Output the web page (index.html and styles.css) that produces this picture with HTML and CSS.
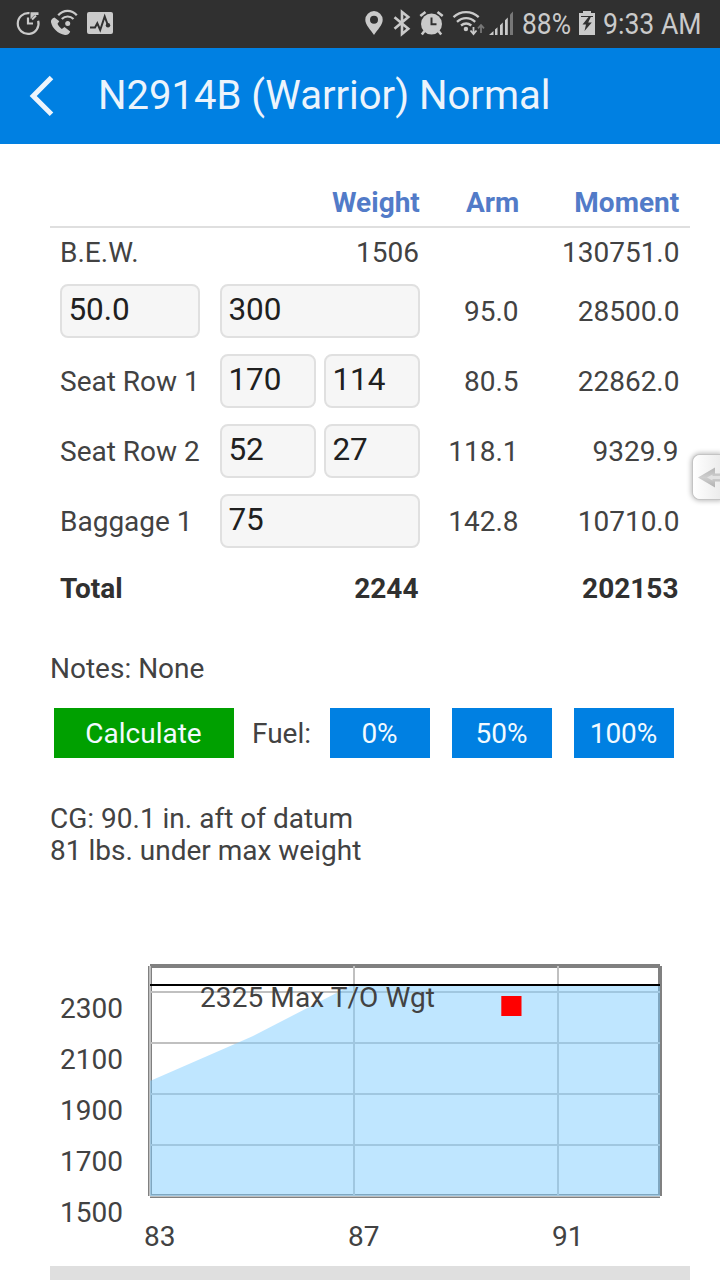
FILE: index.html
```html
<!DOCTYPE html>
<html lang="en">
<head>
<meta charset="utf-8">
<title>N2914B (Warrior) Normal</title>
<link rel="stylesheet" href="styles.css">
</head>
<body>
<div class="status-bar">
  <svg class="status-icons" width="720" height="48" viewBox="0 0 720 48">
    <g fill="none" stroke="#cacaca" stroke-width="2.2">
      <path d="M29.5 13.2A10.4 10.4 0 1 0 38.2 20.8"/>
      <path d="M28 17.5V23.5H33"/>
      <path d="M32 19.5L36 15.5"/>
    </g>
    <path d="M30.5 12.3H38.5V15H34.5L30.5 19Z" fill="#cacaca"/>
    <path d="M54.5 17.5C52 18.5 50.6 20 51 22.3C52.5 28.5 57.5 33.5 65 35C67.5 35.3 69.8 33.4 70.2 31.5L64.5 27L61.8 28.9C59.8 27.6 58.4 25.7 57.5 23.7L59.3 21.2Z" fill="#cacaca"/>
    <circle cx="67.7" cy="23.5" r="2.5" fill="#cacaca"/>
    <g fill="none" stroke="#cacaca" stroke-width="2.2"><path d="M58.2 15.3C63.5 9.5 71.7 9.5 76.8 15.3"/><path d="M61.8 19.1C65.2 15.6 70.1 15.6 73.5 19.1"/></g>
    <rect x="87" y="12" width="26" height="22" rx="2" fill="#cacaca"/>
    <path d="M90 27.5H95L97.3 23.3L100.2 30L104.7 16.5L107.8 25" fill="none" stroke="#303030" stroke-width="2"/>
    <circle cx="108" cy="25.3" r="2.2" fill="#303030"/>
    <path fill="#cacaca" fill-rule="evenodd" d="M374 35C370.5 29.8 365.3 25 365.3 19.8A8.7 8.7 0 0 1 382.7 19.8C382.7 25 377.5 29.8 374 35ZM374 15.7A4 4 0 1 0 374 23.7A4 4 0 1 0 374 15.7Z"/>
    <path d="M394.5 17.2L408.3 28.7L402 34V12L408.3 17L394.5 28.8" fill="none" stroke="#cacaca" stroke-width="2.6"/>
    <circle cx="431.5" cy="24" r="10.5" fill="#cacaca"/>
    <path d="M420.3 16L425.5 12M442.7 16L437.5 12M424.5 31L421.8 34.5M438.5 31L441.2 34.5" stroke="#cacaca" stroke-width="2.6"/>
    <path d="M431.5 17.5V24.2H436.5" fill="none" stroke="#303030" stroke-width="2"/>
    <g fill="none" stroke="#cacaca" stroke-width="2.3"><path d="M453.5 17.2C460.5 10.5 471.5 10.5 478.7 17.2"/><path d="M457 21.8C462.5 16.8 469.8 16.8 475.2 21.8"/><path d="M461 25.5C464.3 22.9 468 22.9 471.3 25.5"/></g>
    <circle cx="465.9" cy="29" r="2.2" fill="#cacaca"/>
    <path d="M473.5 27V33M470.5 30.5L473.5 34L476.5 30.5" fill="none" stroke="#cacaca" stroke-width="1.8"/>
    <path d="M481 33V25.5M478 28.3L481 25L484 28.3" fill="none" stroke="#777" stroke-width="1.8"/>
    <path fill="#cacaca" d="M489 35L493.5 31V35ZM495 29.5L497.5 27.3V35H495ZM500 25.2L502.8 22.5V35H500ZM505 20.2L507.8 17.5V35H505Z"/>
    <path fill="#777" d="M510 14.5L513 11.5V35H510Z"/>
    <path fill="#cacaca" d="M583 11H591V13H595V35H579V13H583Z"/>
    <path stroke="#303030" stroke-width="1" d="M581 16.5H593"/>
    <path fill="#303030" d="M588.5 17L582.5 24.5H586L584.5 31L591.8 22.5H588.2L590.8 17Z"/>
    <text class="status-text" x="522" y="33.8" textLength="49" lengthAdjust="spacingAndGlyphs">88%</text>
    <text class="status-text" x="603" y="33.8" textLength="98.5" lengthAdjust="spacingAndGlyphs">9:33 AM</text>
  </svg>
</div>

<header class="app-bar">
  <svg class="back" width="26" height="42" viewBox="0 0 26 42"><path d="M22.5 2.5L4.2 21L22.5 39.2" fill="none" stroke="#ecf4fc" stroke-width="5"/></svg>
  <h1 class="title">N2914B (Warrior) Normal</h1>
</header>

<main class="content">
  <section class="sheet">
    <div class="row head"><span></span><span class="num weight">Weight</span><span class="num arm">Arm</span><span class="num">Moment</span></div>
    <div class="row basic"><span>B.E.W.</span><span class="num weight">1506</span><span></span><span class="num moment">130751.0</span></div>
    <div class="row entry"><div class="field">50.0</div><div class="field">300</div><span class="num arm">95.0</span><span class="num moment">28500.0</span></div>
    <div class="row entry"><span>Seat Row 1</span><div class="pair"><div class="field">170</div><div class="field">114</div></div><span class="num arm">80.5</span><span class="num moment">22862.0</span></div>
    <div class="row entry"><span>Seat Row 2</span><div class="pair"><div class="field">52</div><div class="field">27</div></div><span class="num arm">118.1</span><span class="num">9329.9</span></div>
    <div class="row entry"><span>Baggage 1</span><div class="field">75</div><span class="num arm">142.8</span><span class="num moment">10710.0</span></div>
    <div class="row total"><span>Total</span><span class="num">2244</span><span></span><span class="num">202153</span></div>
  </section>

  <p class="notes">Notes: None</p>

  <div class="actions">
    <div class="button calculate">Calculate</div>
    <span class="fuel-label">Fuel:</span>
    <div class="fuel-options"><div class="button fuel">0%</div><div class="button fuel">50%</div><div class="button fuel">100%</div></div>
  </div>

  <p class="result">CG: 90.1 in. aft of datum<br>81 lbs. under max weight</p>

  <svg class="chart" width="640" height="304" viewBox="50 962 640 304">
    <g fill="#808080">
      <rect x="150" y="964" width="510" height="4"/>
      <rect x="148" y="966" width="4" height="230"/>
      <rect x="658" y="966" width="4" height="230"/>
      <rect x="150" y="1194" width="510" height="4"/>
    </g>
    <g fill="#c0c0c0">
      <rect x="149" y="966" width="2" height="230"/>
      <rect x="353" y="966" width="2" height="230"/>
      <rect x="557" y="966" width="2" height="230"/>
      <rect x="150" y="991" width="510" height="2"/>
      <rect x="150" y="1042" width="510" height="2"/>
      <rect x="150" y="1093" width="510" height="2"/>
      <rect x="150" y="1144" width="510" height="2"/>
      <rect x="150" y="1195" width="510" height="2"/>
    </g>
    <path d="M150 1081L252 1036.5L350 986H660V1196H150Z" fill="#7fcdff" fill-opacity=".5"/>
    <rect x="150" y="984" width="510" height="2" fill="#000"/>
    <rect x="501.3" y="996" width="20.2" height="20" fill="#f00"/>
    <g class="chart-text">
      <text x="200" y="1007" textLength="235">2325 Max T/O Wgt</text>
      <text x="60" y="1018">2300</text><text x="60" y="1069">2100</text><text x="60" y="1120">1900</text><text x="60" y="1171">1700</text><text x="60" y="1222">1500</text>
      <text x="144" y="1246">83</text><text x="348" y="1246">87</text><text x="552" y="1246">91</text>
    </g>
  </svg>
  <div class="divider"></div>
</main>

<div class="drawer-tab">
  <svg width="28" height="44" viewBox="0 0 28 44">
    <defs><linearGradient id="arrow" x1="0" y1="0" x2="0" y2="1"><stop offset="0" stop-color="#b4b4b4"/><stop offset=".5" stop-color="#cfcfcf"/><stop offset="1" stop-color="#b0b0b0"/></linearGradient></defs>
    <path d="M5 22.5L22 12.5V18.5H28V26.5H22V32.5Z" fill="url(#arrow)"/>
    <path d="M14 22.5L19.5 19.5V21H28V24H19.5V25.5Z" fill="#e2e2e2"/>
  </svg>
</div>
</body>
</html>
```
FILE: styles.css
```css
* { box-sizing: border-box; }

body {
  position: relative;
  width: 720px;
  height: 1280px;
  margin: 0;
  overflow: hidden;
  background: #fff;
  color: #424242;
  font: 28px/32px Roboto, sans-serif;
}

.status-bar { height: 48px; background: #303030; }
.status-icons { display: block; }
.status-text { fill: #cacaca; font-size: 29.5px; }

.app-bar {
  display: flex;
  align-items: center;
  height: 96px;
  padding-left: 29px;
  background: #0080e2;
}
.back { flex: none; }
.title {
  margin: 0 0 0 43px;
  color: #ecf4fc;
  font-size: 40px;
  font-weight: 400;
  line-height: 48px;
  white-space: nowrap;
}

.content { padding: 32px 30px 0 50px; }
.sheet { display: flex; flex-direction: column; }
.row {
  display: grid;
  grid-template-columns: 140px 200px 80px 140px;
  column-gap: 20px;
  align-items: center;
  padding: 0 10px;
}
.row > span { white-space: nowrap; }
.num { padding-right: 1.5px; text-align: right; }
.num.weight { padding-right: 1px; }
.num.moment { padding-right: 0.5px; }
.head {
  height: 52px;
  border-bottom: 2px solid #dfdfdf;
  color: #527bc8;
  font-weight: 700;
}
.head .num { padding-top: 4px; padding-right: 0.8px; }
.head .num.weight { padding-right: 0.2px; }
.basic { height: 48px; padding-top: 1px; }
.entry { height: 70px; }
.entry > span { padding-top: 2px; }
.total { height: 64px; padding-top: 1px; color: #303030; font-weight: 700; }

.field {
  height: 54px;
  padding: 8px 6.4px 0;
  border: 2px solid #e0e0e0;
  border-radius: 8px;
  background: #f6f6f6;
  color: #202020;
  font-size: 31.5px;
}
.pair { display: grid; grid-template-columns: 1fr 1fr; gap: 8px; }

.notes { margin: 33px 0 0; }

.actions {
  display: flex;
  align-items: center;
  height: 50px;
  margin-top: 23px;
  padding-left: 4px;
}
.button { height: 50px; padding-right: 1px; color: #f2faff; line-height: 52px; text-align: center; }
.calculate { width: 180px; background: #00a000; }
.fuel-label { width: 96px; padding: 2px 0 0 18px; }
.fuel-options { display: flex; gap: 22px; }
.fuel { width: 100px; background: #0080e2; }

.result { margin: 45px 0 0; }
.chart { display: block; margin-top: 95px; }
.chart-text { fill: #424242; }
.divider { height: 14px; background: #dfdfdf; }

.drawer-tab {
  position: absolute;
  top: 455px;
  right: 0;
  width: 27px;
  height: 44px;
  border-radius: 7px 0 0 7px;
  background: linear-gradient(90deg, #fff, #ececec);
  box-shadow: 0 0 0 1px #c4c4c4, 0 0 5px 2px #bbb;
}
```
